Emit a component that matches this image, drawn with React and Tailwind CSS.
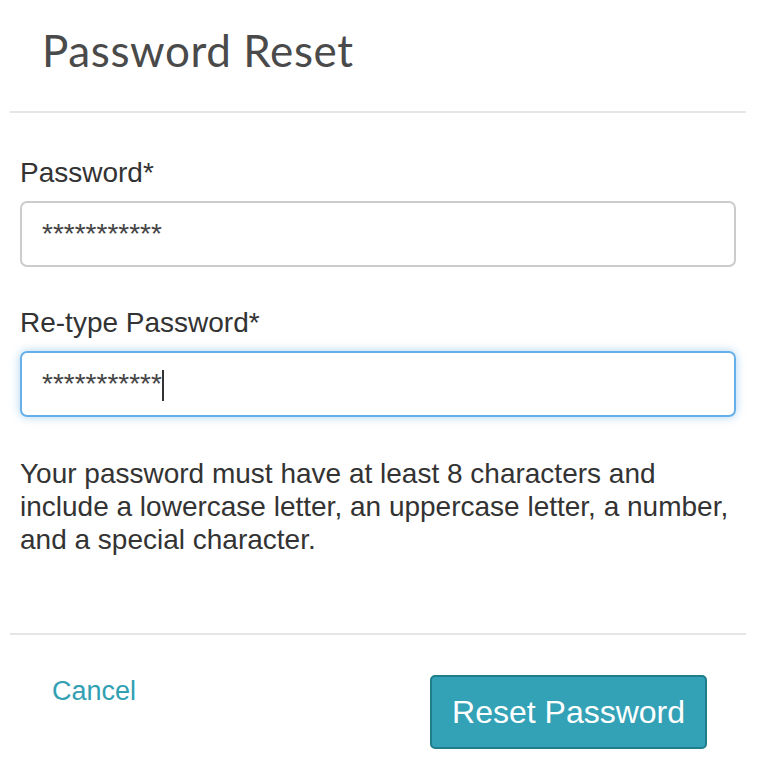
export default function App() {
  return (
    <div className="w-[765px] h-[772px] bg-white relative overflow-hidden" style={{ fontFamily: '"Liberation Sans", Arial, sans-serif' }}>
      <div className="pl-[42px] pt-[24px] h-[111px]">
        <h1 className="text-[44px] leading-[52px] tracking-[0.6px] text-[#4a4a4a] font-normal" style={{ fontFamily: 'Lato, "Open Sans", sans-serif' }}>Password Reset</h1>
      </div>
      <div className="mx-[10px] w-[736px] h-[2px] bg-[#e5e5e5]" />
      <div className="px-[20px] pt-[43px]">
        <label className="block text-[28px] leading-[34px] text-[#333]">Password*</label>
        <div className="mt-[11px] w-[716px] h-[66px] border-2 border-[#cccccc] rounded-[7px] flex items-center px-[20px] text-[#444] text-[28px]">***********</div>
        <label className="block mt-[39px] text-[28px] leading-[34px] text-[#333]">Re-type Password*</label>
        <div className="mt-[11px] w-[716px] h-[66px] border-2 border-[#66afe9] rounded-[7px] flex items-center px-[20px] text-[#444] text-[28px] shadow-[0_0_10px_rgba(102,175,233,0.55)]">
          <span>***********</span>
          <span className="inline-block w-[2px] h-[31px] bg-[#333] mt-[2px]" />
        </div>
        <p className="mt-[40px] text-[28px] leading-[33px] text-[#333]">Your password must have at least 8 characters and include a lowercase letter, an uppercase letter, a number, and a special character.</p>
      </div>
      <div className="mt-[77px] mx-[10px] w-[736px] h-[2px] bg-[#e5e5e5]" />
      <div className="flex items-start pt-[40px]">
        <a className="ml-[52px] text-[27px] leading-[32px] text-[#31a0b3]">Cancel</a>
        <button className="ml-[294px] w-[277px] h-[74px] bg-[#33a2b6] border-2 border-[#1f7e8c] rounded-[5px] text-white text-[32px] leading-none">Reset Password</button>
      </div>
    </div>
  );
}
